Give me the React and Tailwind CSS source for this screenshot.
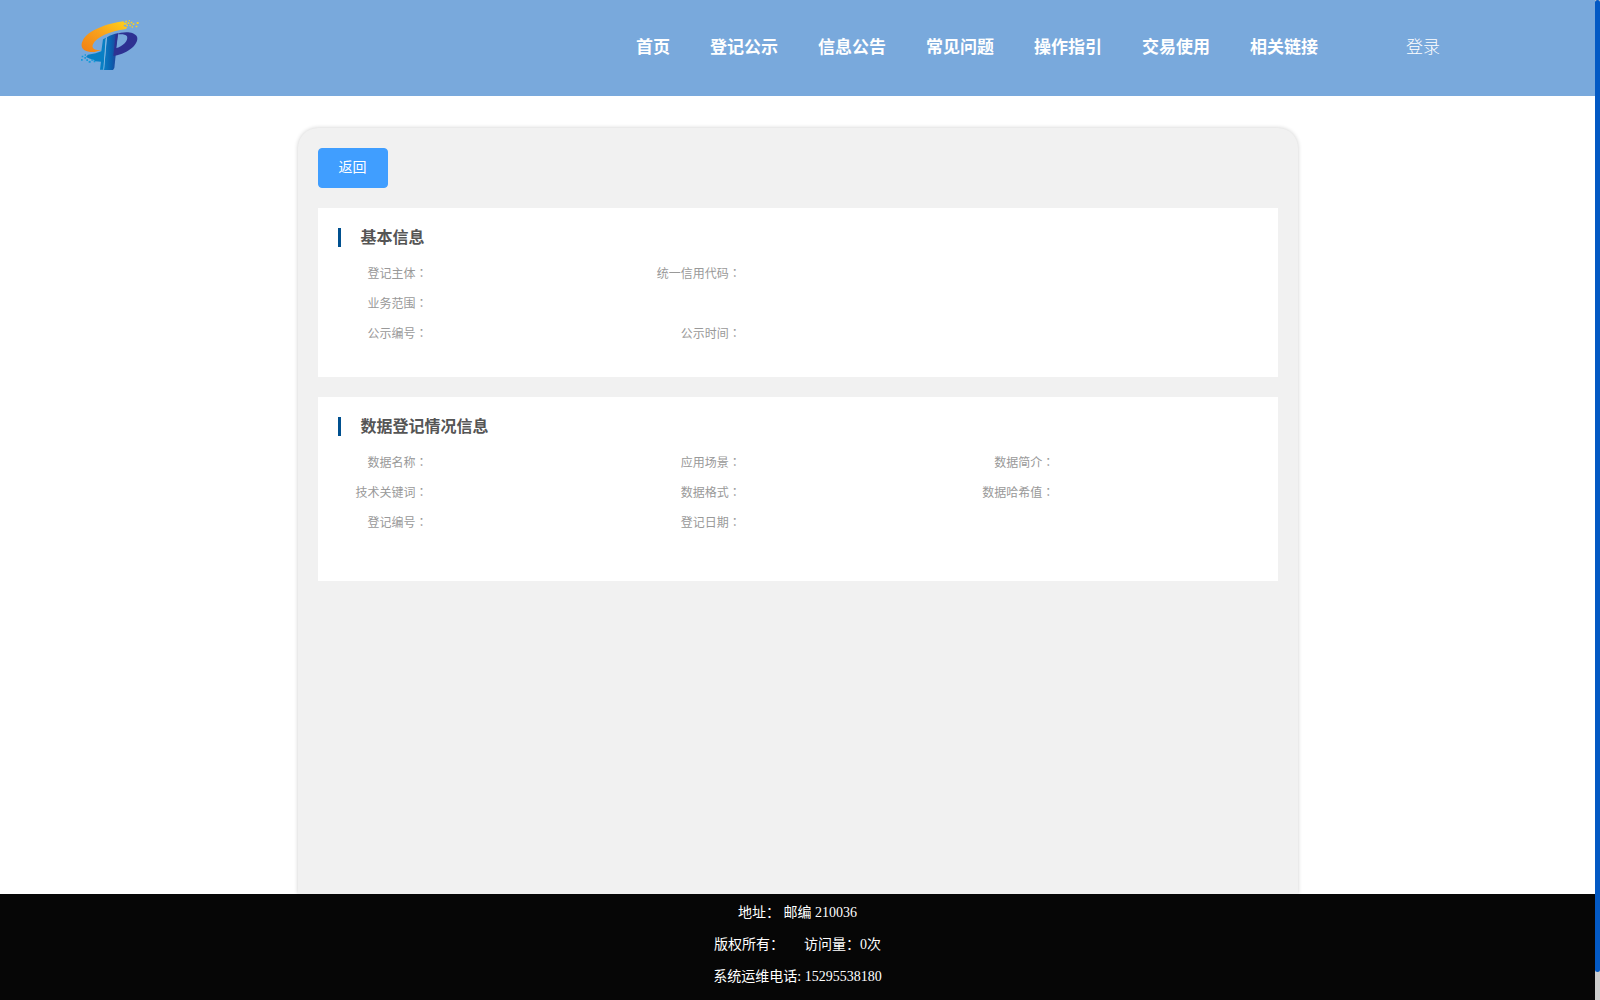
import React from 'react';

const navItems = ['首页', '登记公示', '信息公告', '常见问题', '操作指引', '交易使用', '相关链接'];

const basicInfo = [
    ['登记主体', '统一信用代码'],
    ['业务范围'],
    ['公示编号', '公示时间'],
];

const dataInfo = [
    ['数据名称', '应用场景', '数据简介'],
    ['技术关键词', '数据格式', '数据哈希值'],
    ['登记编号', '登记日期'],
];

const Logo = () => (
    <svg className="w-15 h-[54px]" viewBox="60 54 180 162" aria-hidden="true">
        <defs>
            <linearGradient id="ring" x1="0" y1="1" x2="1" y2="0">
                <stop offset="0" stopColor="#f07f13" />
                <stop offset="0.5" stopColor="#f9a01c" />
                <stop offset="1" stopColor="#ffd21a" />
            </linearGradient>
            <linearGradient id="stem" x1="0" y1="0" x2="1" y2="0">
                <stop offset="0" stopColor="#0a7cc4" />
                <stop offset="0.55" stopColor="#0b5fae" />
                <stop offset="1" stopColor="#2b3a94" />
            </linearGradient>
        </defs>
        <path
            d="M190 64C142 70 82 92 68 122C57 145 74 158 104 156L124 150C102 152 94 144 99 133C108 112 149 93 198 87L202 82L190 78L196 71Z"
            fill="url(#ring)"
        />
        <path
            d="M196 62h5v5h-5zM206 60h4v4h-4zM203 67h5v5h-5zM212 65h5v5h-5zM218 70h5v5h-5zM208 74h5v5h-5zM199 74h5v5h-5zM230 66h6v6h-6zM227 77h5v5h-5zM215 79h4v4h-4zM194 68h6v6h-6z"
            fill="#ffcf1f"
        />
        <path
            d="M129 118L138 113L132 209H120L123 185L106 184L98 178L90 176L78 171L84 164L107 160L124 154Z"
            fill="#087fc4"
        />
        <path
            d="M63 177h5v5h-5zM65 167h5v5h-5zM73 171h5v5h-5zM79 178h5v5h-5zM86 183h6v5h-6zM94 177h6v5h-6zM101 182h5v5h-5zM74 163h4v4h-4z"
            fill="#139bd8"
        />
        <path d="M141 112C151 105 162 102 174 100L163 204L159 210H132Z" fill="url(#stem)" />
        <path
            d="M167 103C190 94 222 94 231 110C238 131 205 160 164 167L167 145C189 140 206 122 201 109C196 102 185 102 174 103L164 167L160 168Z"
            fill="#2e3192"
        />
        <path d="M137 116L140 114L132 209H130Z" fill="#8fc0e6" />
    </svg>
);

const InfoCard = ({ title, rows, className }) => (
    <section className={`bg-white pl-5 pt-5 ${className}`}>
        <div className="flex items-center gap-5 h-[19px]">
            <span className="w-[3px] h-full bg-[#00508f]" />
            <h2 className="text-base leading-none font-bold text-[#555]">{title}</h2>
        </div>
        <dl className="mt-[11px]">
            {rows.map((row) => (
                <div key={row[0]} className="grid grid-cols-3">
                    {row.map((label) => (
                        <div key={label} className="flex h-[30px] items-center">
                            <dt className="w-[90px] text-right text-xs text-[#999] whitespace-nowrap">
                                {label}
                                <span className="font-['Noto_Sans_CJK_TC',sans-serif]">：</span>
                            </dt>
                            <dd />
                        </div>
                    ))}
                </div>
            ))}
        </dl>
    </section>
);

const App = () => {
    return (
        <div className="flex h-screen font-['Liberation_Serif','Noto_Sans_CJK_SC',sans-serif]">
            <div className="flex min-w-0 flex-1 flex-col bg-white">
                <header className="flex h-24 shrink-0 items-center bg-[#79a9dc] pl-20 pr-[155px] text-white">
                    <div className="mb-1.5 flex-1">
                        <Logo />
                    </div>
                    <nav className="flex gap-10 text-[17px] font-bold">
                        {navItems.map((item) => (
                            <a key={item} href="#">{item}</a>
                        ))}
                    </nav>
                    <a href="#" className="ml-[88px] text-[17px] font-light">登录</a>
                </header>

                <main className="flex min-h-0 flex-1 flex-col overflow-hidden pt-8">
                    <div className="mx-auto w-full max-w-[1000px] flex-1 rounded-t-[20px] bg-[#f1f1f1] p-5 shadow-[0_0_4px_rgba(0,0,0,0.2)]">
                        <button
                            type="button"
                            className="block h-10 rounded border border-[#409eff] bg-[#409eff] px-5 text-sm text-white"
                        >
                            返回
                        </button>
                        <div className="mt-5 flex flex-col gap-5">
                            <InfoCard title="基本信息" rows={basicInfo} className="pb-[29px]" />
                            <InfoCard title="数据登记情况信息" rows={dataInfo} className="pb-11" />
                        </div>
                    </div>
                </main>

                <footer className="shrink-0 bg-[#060606] pt-[3px] pb-[7px] text-center text-sm text-white">
                    <p className="leading-8">地址： 邮编 210036</p>
                    <p className="leading-8">
                        版权所有：<span className="ml-5">访问量：0次</span>
                    </p>
                    <p className="leading-8">系统运维电话: 15295538180</p>
                </footer>
            </div>

            {/* scrollbar track and thumb */}
            <div className="w-[5px] shrink-0 bg-[#ccc]">
                <div className="h-[97.2%] rounded-full bg-[#0359c4]" />
            </div>
        </div>
    );
};

export default App;
